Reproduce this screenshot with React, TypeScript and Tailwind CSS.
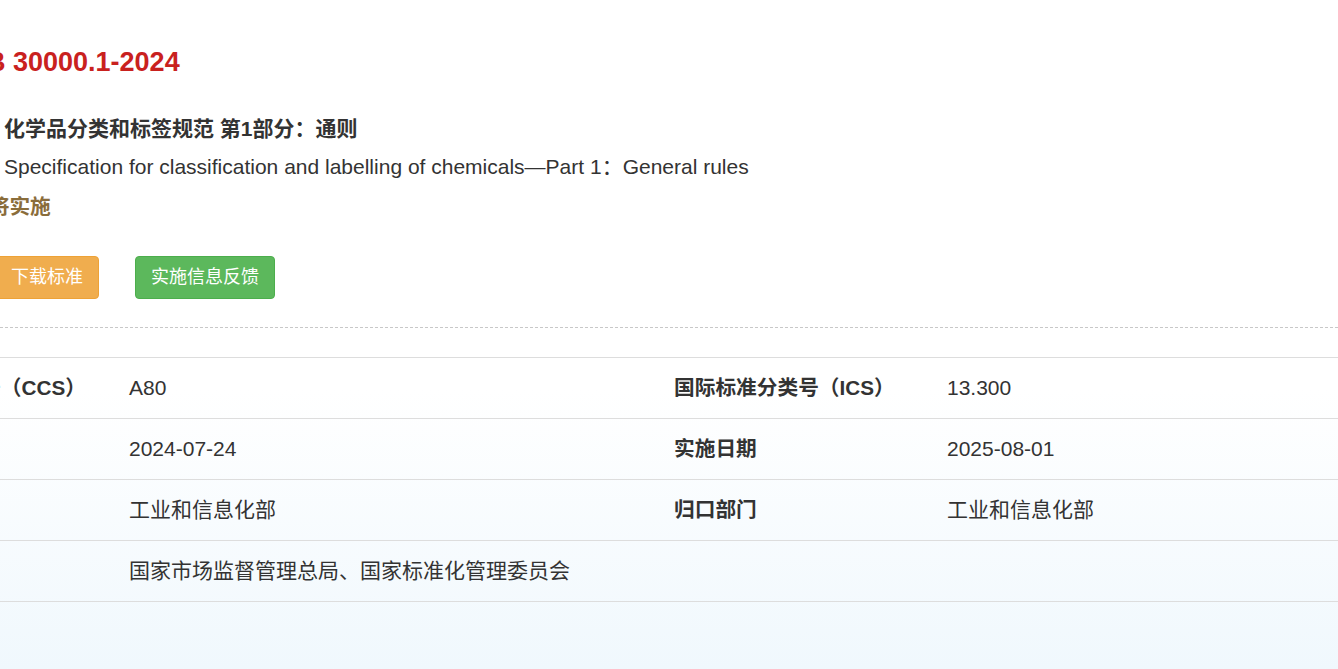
const font = '[font-family:"Liberation_Sans","Noto_Sans_CJK_SC",sans-serif]'

const rows: { l1: string; v1: string; l2?: string; v2?: string }[] = [
  { l1: '中国标准分类号（CCS）', v1: 'A80', l2: '国际标准分类号（ICS）', v2: '13.300' },
  { l1: '发布日期', v1: '2024-07-24', l2: '实施日期', v2: '2025-08-01' },
  { l1: '主管部门', v1: '工业和信息化部', l2: '归口部门', v2: '工业和信息化部' },
  { l1: '发布单位', v1: '国家市场监督管理总局、国家标准化管理委员会' },
]

export default function App() {
  return (
    <div
      className={`${font} w-[1338px] h-[669px] overflow-hidden text-[#333] bg-[linear-gradient(to_bottom,#ffffff_0px,#ffffff_390px,#f0f8fd_669px)]`}
    >
      <div className="-ml-[35px] pt-[42px]">
        <h1 className="text-[27px] leading-[40px] font-bold text-[#c9211e] whitespace-nowrap">GB 30000.1-2024</h1>
        <p className="mt-[32px] pl-[39px] text-[21px] leading-[30px] font-bold whitespace-nowrap">
          化学品分类和标签规范 第1部分：通则
        </p>
        <p className="mt-[8px] pl-[39px] text-[21px] leading-[30px] whitespace-nowrap">
          Specification for classification and labelling of chemicals—Part 1：General rules
        </p>
        <p className="mt-[10px] pl-[3px] text-[20.7px] leading-[30px] font-bold text-[#8a6d3b] whitespace-nowrap">
          即将实施
        </p>
        <div className="mt-[34px] pl-[30px] flex gap-[36px]">
          <button className="h-[43px] px-[15px] rounded-[4px] border border-[#eea236] bg-[#f0ad4e] text-white text-[18px]">
            下载标准
          </button>
          <button className="h-[43px] px-[15px] rounded-[4px] border border-[#4cae4c] bg-[#5cb85c] text-white text-[18px]">
            实施信息反馈
          </button>
        </div>
      </div>
      <div className="mt-[28px] border-t border-dashed border-[#c8c8c8]" />
      <div className="mt-[29px] -ml-[154px] w-[1636px] border-t border-[#dddddd]">
        {rows.map((r) => (
          <div key={r.l1} className="grid grid-cols-[273px_545px_273px_545px] h-[61px] border-b border-[#dddddd]">
            <div className="pl-[10px] flex items-center text-[20.7px] font-bold whitespace-nowrap">{r.l1}</div>
            <div className={`pl-[10px] flex items-center text-[21px] whitespace-nowrap ${r.l2 ? '' : 'col-span-3'}`}>
              {r.v1}
            </div>
            {r.l2 && <div className="pl-[10px] flex items-center text-[20.7px] font-bold whitespace-nowrap">{r.l2}</div>}
            {r.l2 && <div className="pl-[10px] flex items-center text-[21px] whitespace-nowrap">{r.v2}</div>}
          </div>
        ))}
      </div>
    </div>
  )
}
